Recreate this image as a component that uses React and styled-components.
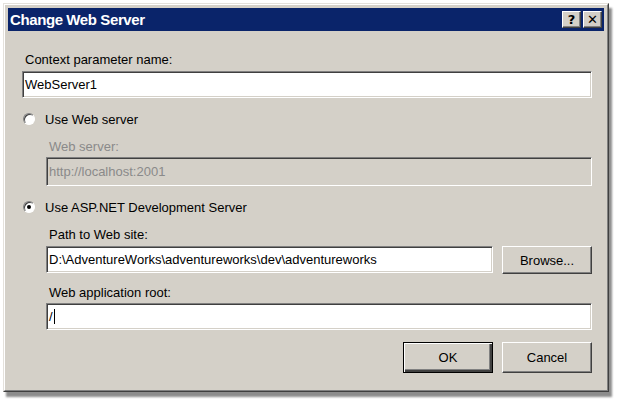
import styled, { createGlobalStyle } from 'styled-components';

const GlobalStyle = createGlobalStyle`
  html, body {
    margin: 0;
    padding: 0;
    background: #ffffff;
  }
  body {
    font-family: "Liberation Sans", Arial, sans-serif;
  }
`;

const Page = styled.div`
  width: 617px;
  height: 404px;
  padding: 3px 0 0 3px;
  box-sizing: border-box;
`;

const Window = styled.div`
  width: 606px;
  height: 389px;
  box-sizing: border-box;
  background: #d4d0c8;
  border: 1px solid;
  border-color: #e4e1dc #404040 #404040 #e4e1dc;
  box-shadow: 3px 5px 2px rgba(0, 0, 0, 0.45);
  display: flex;
  flex-direction: column;
`;

const Frame = styled.div`
  flex: 1;
  border: 1px solid;
  border-color: #ffffff #808080 #808080 #ffffff;
  padding: 3px;
  display: flex;
  flex-direction: column;
`;

const TitleBar = styled.div`
  height: 23px;
  background: #0a246a;
  display: flex;
  align-items: center;
  padding: 0 2px 0 2px;
`;

const Title = styled.div`
  flex: 1;
  color: #ffffff;
  font-weight: bold;
  font-size: 15px;
  letter-spacing: -0.4px;
`;

const CaptionButton = styled.div`
  width: 17px;
  height: 15px;
  margin-left: 2px;
  background: #d4d0c8;
  border: 1px solid;
  border-color: #ffffff #404040 #404040 #ffffff;
  box-shadow: inset -1px -1px 0 #808080;
  display: flex;
  align-items: center;
  justify-content: center;
  color: #000;
  font-family: "DejaVu Sans", sans-serif;
  font-weight: bold;
  font-size: 13px;
  line-height: 1;
`;

const Body = styled.div`
  flex: 1;
  padding: 21px 12px 0 14px;
  display: flex;
  flex-direction: column;
`;

const Label = styled.div`
  height: 16px;
  line-height: 16px;
  font-size: 13px;
  color: ${p => (p.$disabled ? '#8a8a8a' : '#000')};
  margin-top: ${p => p.$top || 0}px;
  margin-left: 3px;
`;

const Field = styled.div`
  box-sizing: border-box;
  height: ${p => p.$h || 27}px;
  flex: ${p => (p.$grow ? 1 : 'none')};
  margin-top: ${p => p.$top || 0}px;
  background: ${p => (p.$disabled ? '#d4d0c8' : '#ffffff')};
  color: ${p => (p.$disabled ? '#8a8a8a' : '#000')};
  border: 1px solid;
  border-color: #808080 #ffffff #ffffff #808080;
  box-shadow: inset 1px 1px 0 #404040, inset -1px -1px 0 #d4d0c8;
  font-size: 13px;
  padding-left: 2px;
  display: flex;
  align-items: center;
  white-space: nowrap;
`;

const Caret = styled.span`
  display: inline-block;
  width: 1px;
  height: 15px;
  background: #000;
  margin-left: 1px;
`;

const RadioRow = styled.div`
  display: flex;
  align-items: center;
  height: 16px;
  margin-top: ${p => p.$top || 0}px;
  font-size: 13px;
`;

const Radio = styled.span`
  width: 12px;
  height: 12px;
  box-sizing: border-box;
  border-radius: 50%;
  background: #ffffff;
  border: 1px solid;
  border-color: #808080 #ffffff #ffffff #808080;
  box-shadow: inset 1px 1px 0 #404040;
  margin: 0 10px 0 1px;
  display: flex;
  align-items: center;
  justify-content: center;

  &::after {
    content: '';
    width: 4px;
    height: 4px;
    border-radius: 50%;
    background: ${p => (p.$checked ? '#000' : 'transparent')};
  }
`;

const Indent = styled.div`
  display: flex;
  flex-direction: column;
  margin-left: 24px;
`;

const FieldRow = styled.div`
  display: flex;
  align-items: flex-start;
  gap: 9px;
  margin-top: ${p => p.$top || 0}px;
`;

const Button = styled.div`
  box-sizing: border-box;
  width: 90px;
  height: ${p => p.$h || 29}px;
  background: #d4d0c8;
  border: 1px solid;
  border-color: ${p => (p.$default ? '#000' : '#ffffff #404040 #404040 #ffffff')};
  box-shadow: ${p =>
    p.$default
      ? 'inset 1px 1px 0 #ffffff, inset -2px -2px 0 #404040, inset -3px -3px 0 #808080'
      : 'inset -1px -1px 0 #808080'};
  display: flex;
  align-items: center;
  justify-content: center;
  font-size: 13px;
  color: #000;
`;

const ButtonRow = styled.div`
  display: flex;
  justify-content: flex-end;
  gap: 9px;
  margin-top: 12px;
`;

export default function App() {
  return (
    <>
      <GlobalStyle />
      <Page>
        <Window>
          <Frame>
            <TitleBar>
              <Title>Change Web Server</Title>
              <CaptionButton>?</CaptionButton>
              <CaptionButton>✕</CaptionButton>
            </TitleBar>
            <Body>
              <Label>Context parameter name:</Label>
              <Field $top={3}>WebServer1</Field>

              <RadioRow $top={13}>
                <Radio />
                Use Web server
              </RadioRow>
              <Indent>
                <Label $disabled $top={12}>Web server:</Label>
                <Field $disabled $h={29} $top={2}>http://localhost:2001</Field>
              </Indent>

              <RadioRow $top={13}>
                <Radio $checked />
                Use ASP.NET Development Server
              </RadioRow>
              <Indent>
                <Label $top={12}>Path to Web site:</Label>
                <FieldRow $top={3}>
                  <Field $grow>D:\AdventureWorks\adventureworks\dev\adventureworks</Field>
                  <Button $h={28}>Browse...</Button>
                </FieldRow>
                <Label $top={11}>Web application root:</Label>
                <Field $top={2}>
                  /<Caret />
                </Field>
              </Indent>

              <ButtonRow>
                <Button $default $h={31}>OK</Button>
                <Button $h={31}>Cancel</Button>
              </ButtonRow>
            </Body>
          </Frame>
        </Window>
      </Page>
    </>
  );
}
